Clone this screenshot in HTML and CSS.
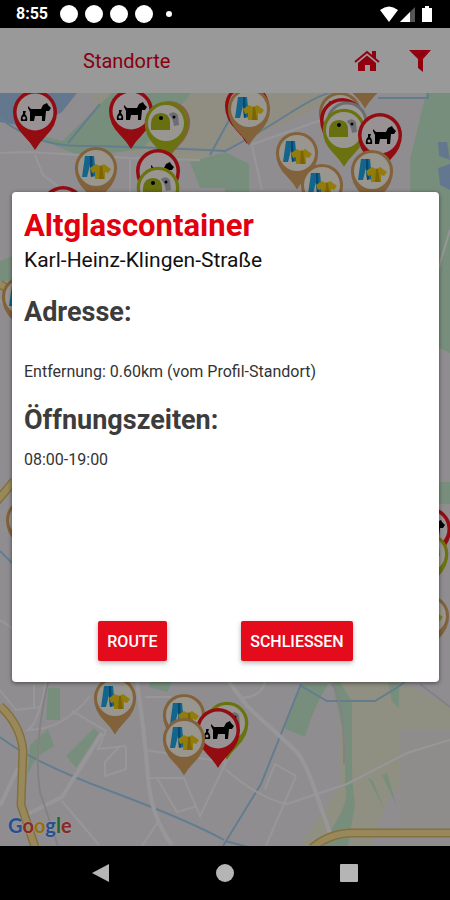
FILE: index.html
```html
<!DOCTYPE html>
<html lang="de">
<head>
<meta charset="utf-8">
<meta name="viewport" content="width=device-width, initial-scale=1">
<title>Standorte</title>
<link rel="stylesheet" href="styles.css">
</head>
<body>
<div class="status">
  <span class="time">8:55</span>
  <span class="notices"><i></i><i></i><i></i><i></i><i class="small"></i></span>
  <svg class="signals" width="54" height="18" viewBox="0 0 54 18" aria-hidden="true">
    <path fill="#fff" d="M0 5Q9-2 18 5L9 17Z"/>
    <path fill="#555" d="M20 17 35 2v15z"/><path fill="#fff" d="M20 17 30 7v10z"/>
    <path fill="#fff" d="M42 3h3V1h4v2h3v14H42z"/>
  </svg>
</div>
<div class="screen">
  <header class="bar">
    <h1>Standorte</h1>
    <button class="icon" type="button" aria-label="Startseite">
      <svg width="26" height="22" viewBox="0 0 26 22"><path d="M13 5.500 22 13v8h-6v-6h-5v6H4v-8z"/><path d="M1 12 13 2l12 10" fill="none" stroke="#f00019" stroke-width="2"/><path d="M18 1h4v8l-4-3.300z"/></svg>
    </button>
    <button class="icon" type="button" aria-label="Filter">
      <svg width="24" height="24" viewBox="0 0 24 24"><path d="M1 1h22l-8 9v13l-5-4v-9z"/></svg>
    </button>
  </header>
  <main class="map">
    <svg class="tiles" viewBox="0 93 450 753" preserveAspectRatio="xMidYMid slice" aria-hidden="true">
      <defs>
        <path id="pin" d="M0 38Q-4 31-11 24-22 13-22 0A22 22 0 0 1 22 0Q22 13 11 24 4 31 0 38Z"/>
        <g id="dog">
          <use href="#pin" fill="#f5141f"/><circle r="18.500" fill="#fff4f8"/>
          <path d="M-7-6-4-3H6L8-7 12-9 13-7 16-4 14-1H11L10 9H7V4H0L-1 9H-5V0L-7-4Z"/>
          <path d="M-12-1h3l-1 3q3 3 2 7h-6q-1-4 2-7z"/><circle cx="-11" cy="6" r="1.500" fill="#fff"/>
        </g>
        <g id="cloth">
          <use href="#pin" fill="#d9a463" transform="scale(.96)"/><circle r="18" fill="#fff8ef"/>
          <path fill="#20a8e8" d="M-11-12H-2L0 8-5 9-6-3-9 9H-14Z"/><path fill="#0a78c0" d="M-6-12h2l1 20-2 1-1-12z"/>
          <path fill="#f5cf18" d="M-6 0 0-4Q4-1 8-4L15 1 12 5 9 4V11H-1V4L-4 5Z"/><path fill="#d3a700" d="M4-2h2l2 13H3z"/>
        </g>
        <g id="glass">
          <use href="#pin" fill="#b3c01c" transform="scale(.97)"/><circle r="18" fill="#fffbf4"/>
          <path fill="#b6b8c4" d="M3-9Q8-13 12-8L13 2 8 3Q7-5 3-8Z"/><circle cx="8" cy="-6" r="1.500"/>
          <path fill="#acb91c" d="M-15 7V0Q-14-10-5-10T4 0V7Z"/><circle cx="-5" cy="-5" r="2"/>
        </g>
      </defs>
      <rect y="93" width="450" height="753" fill="#f0ecf1"/>
      <!-- fields and woods -->
      <path fill="#eeeed9" d="M92 93h240l-60 32-80 37-90-14zM340 682h60l50 24v40l-60 50-20 50h-70l40-60z"/>
      <path fill="#c9edcf" d="M112 93h80l-50 56-60 8-70-30 50 14zM190 162l35-10v36h-25zM225 152l24 12v28h-24zM426 93h24v260l-40-20V160zM0 261l12-5v25H0zM439 482h11v22h-11z"/>
      <path fill="#f0ecd9" d="M190 93h150l-32 20-85 37-65 6z"/>
      <path fill="#eeecea" d="M400 730h50v100h-50z"/>
      <path fill="#c9edcf" d="M48 688h12v32H46zM30 745l18-16 6 17-17 11-10 18zM66 756l28-28 5 5-23 35zM302 684h26q-15 25-23 53l-22-9zM340 682l12 20v60q0 25 3 42l-7 42h-30q34-40 27-60v-45l-13-59zM368 778l17 33-12-30zM382 775l15 32-10-34zM150 682h22l-5 10-18-5zM388 683h11v25l-7-6z"/>
      <path fill="#a6c9ee" d="M0 93h77L62 112 35 128 0 122zM438 142h9l3 18-11-4zM438 168l12-4v26l-10-5z"/>
      <!-- water -->
      <g fill="none" stroke="#a5d0ef" stroke-width="2">
        <path d="M0 118q35 28 80 28t145 5q24-12 65-38t50-20M100 104 68 143M240 100l-30 55M378 98h50V93M0 737q30 24 110 54t114 49M301 684l-40 100-38 62M301 686l26 15h48l23-14 8-6M0 551l12 12M225 841l23 6"/>
      </g>
      <!-- roads -->
      <g fill="none" stroke="#fcfafd" stroke-width="2">
        <path d="M0 153l30-1 100 6 70 2M35 155l8 20 20 15M130 158v35M250 145l100-35M252 146l10 44M0 690l16 20 25-3M34 685v24M46 682q-7 40-18 48 35 0 62-34M72 711l34 20-8 18 28-3M62 801l37 44M145 697h26M120 746l-15 16v14l21-7v-22M145 750l80 12M150 778h34l16 38 32-66M157 778l20 34 20-6M158 822l-16 24M225 769q35 30 62 35l60-20 60-31 43-13M275 764l-10 25M275 764l21 12-30 70M265 682q-3 15-25 16M426 310l24-80M0 300l12 14M0 620l12 8"/>
        <path stroke-width="4" d="M137 682q8 55 11 95t24 68M102 733 62 797 20 818M229 682l18 24 48 44q10 10 22 46l14 40M0 806l18-38"/>
      </g>
      <path fill="none" stroke="#dcd7de" stroke-width="2" d="M48 682q-15 65-8 110l18 54M332 684q13 15 12 80M420 684l30 23"/>
      <g fill="none">
        <path stroke="#dcbb68" stroke-width="9" d="M0 706q20 18 23 44l-2 55 14 42M312 848q18-15 40-15h98M-3 501l17-20M0 284l12 8"/>
        <path stroke="#ffe596" stroke-width="6" d="M0 706q20 18 23 44l-2 55 14 42M312 848q18-15 40-15h98M-3 501l17-20M0 284l12 8"/>
      </g>
      <!-- markers -->
      <use href="#cloth" x="365" y="72"/>
      <use href="#dog" x="247" y="106"/><use href="#cloth" x="249" y="109"/>
      <use href="#dog" x="35" y="112"/><use href="#dog" x="131" y="111"/>
      <use href="#cloth" x="169" y="122"/><use href="#glass" x="166" y="123"/>
      <use href="#dog" x="63" y="208"/><use href="#cloth" x="96" y="168"/>
      <use href="#dog" x="158" y="171"/><use href="#glass" x="158" y="188"/>
      <use href="#cloth" x="340" y="113"/><use href="#dog" x="342" y="120"/>
      <circle cx="347" cy="122" r="19" fill="#fff" stroke="#b5b5bd" stroke-width="3"/>
      <use href="#glass" x="344" y="130"/><use href="#dog" x="380" y="135"/>
      <use href="#cloth" x="297" y="153"/><use href="#cloth" x="322" y="185"/><use href="#cloth" x="372" y="171"/>
      <use href="#cloth" x="23" y="297"/><use href="#cloth" x="27" y="520"/>
      <use href="#dog" x="429" y="529"/><use href="#glass" x="427" y="554"/><use href="#cloth" x="428" y="616"/>
      <use href="#cloth" x="115" y="698"/><use href="#cloth" x="184" y="715"/>
      <use href="#glass" x="227" y="723"/><use href="#dog" x="218" y="730"/><use href="#cloth" x="184" y="739"/>
    </svg>
    <span class="google"><b class="blue">G</b><b class="red">o</b><b class="yellow">o</b><b class="blue">g</b><b class="green">l</b><b class="red">e</b></span>
  </main>
  <div class="overlay">
    <section class="dialog" role="dialog" aria-labelledby="place">
      <h2 id="place">Altglascontainer</h2>
      <p class="street">Karl-Heinz-Klingen-Straße</p>
      <h3>Adresse:</h3>
      <p class="distance">Entfernung: 0.60km (vom Profil-Standort)</p>
      <h3>Öffnungszeiten:</h3>
      <p class="hours">08:00-19:00</p>
      <div class="actions">
        <button type="button">ROUTE</button>
        <button type="button">SCHLIESSEN</button>
      </div>
    </section>
  </div>
</div>
<nav class="system" aria-label="System">
  <button type="button" aria-label="Zurück"><svg width="20" height="20" viewBox="0 0 20 20"><path d="M1 10 18 1v18z"/></svg></button>
  <button type="button" aria-label="Home"><svg width="20" height="20" viewBox="0 0 20 20"><circle cx="10" cy="10" r="9"/></svg></button>
  <button type="button" aria-label="Übersicht"><svg width="20" height="20" viewBox="0 0 20 20"><rect x="1" y="1" width="18" height="18" rx="1"/></svg></button>
</nav>
</body>
</html>
```
FILE: styles.css
```css
* { box-sizing: border-box; }
body {
  margin: 0;
  height: 100vh;
  display: flex;
  flex-direction: column;
  background: #000;
  font-family: Roboto, "Liberation Sans", sans-serif;
}
h1, h2, h3, p { margin: 0; }
button { font-family: inherit; border: 0; padding: 0; background: none; }
svg { display: block; }

.status {
  display: flex;
  align-items: center;
  height: 28px;
  padding: 0 16px;
  color: #fff;
}
.time { font-size: 16px; font-weight: 700; line-height: 28px; }
.notices { display: flex; align-items: center; gap: 7px; margin-left: 12px; }
.notices i { width: 18px; height: 18px; border-radius: 50%; background: #fff; }
.notices .small { width: 6px; height: 6px; margin-left: 6px; }
.signals { margin-left: auto; }

.screen {
  position: relative;
  flex: 1;
  min-height: 0;
  display: flex;
  flex-direction: column;
}
.bar {
  display: flex;
  align-items: center;
  gap: 28px;
  height: 65px;
  padding: 0 18px 0 83px;
  background: #fff;
}
.bar h1 {
  flex: 1;
  font-size: 20px;
  font-weight: 400;
  line-height: 24px;
  color: #e3001b;
}
.icon svg { fill: #f00019; }

.map { position: relative; flex: 1; min-height: 0; overflow: hidden; }
.tiles { width: 100%; height: 100%; }
.google {
  position: absolute;
  left: 8px;
  bottom: 9px;
  font-family: Lato, sans-serif;
  font-size: 20px;
  line-height: 24px;
  text-shadow: 0 0 2px #fff, 0 0 2px #fff;
}
.google b { font-weight: 700; }
.blue { color: #4285f4; }
.red { color: #ea4335; }
.yellow { color: #fbbc05; }
.green { color: #34a853; }

.overlay {
  position: absolute;
  inset: 0;
  display: flex;
  align-items: center;
  padding: 0 11px 0 12px;
  background: rgba(0, 0, 0, .4);
}
.dialog {
  display: flex;
  flex-direction: column;
  width: 100%;
  height: 60%;
  padding: 16px 12px 21px;
  border-radius: 4px;
  background: #fff;
  box-shadow: 0 1px 4px rgba(0, 0, 0, .5);
}
.dialog h2 { font-size: 31px; font-weight: 700; line-height: 36px; color: #e2000f; }
.dialog h3 { font-size: 27px; font-weight: 700; line-height: 32px; color: #3c3c3c; }
.street { margin-bottom: 20px; font-size: 21px; line-height: 32px; color: #111; }
.distance { margin: 32px 0 20px; font-size: 16px; line-height: 24px; color: #333; }
.hours { margin-top: 12px; font-size: 16px; line-height: 24px; color: #333; }
.actions {
  display: flex;
  justify-content: space-around;
  margin-top: auto;
  padding: 0 37px;
}
.actions button {
  height: 40px;
  padding: 0 9px;
  border-radius: 2px;
  background: #e30b1c;
  color: #fff;
  font-size: 16px;
  font-weight: 500;
  box-shadow: 0 2px 5px rgba(0, 0, 0, .3);
}

.system {
  display: flex;
  justify-content: center;
  gap: 104px;
  height: 54px;
}
.system svg { fill: #b5b5b5; }
```
